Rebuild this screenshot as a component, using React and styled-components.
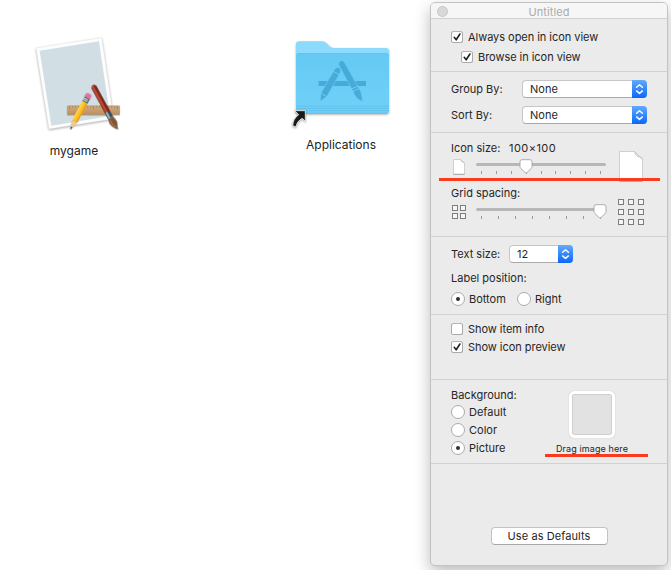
import React from "react";
import styled, { createGlobalStyle } from "styled-components";

const GlobalStyle = createGlobalStyle`
  * { box-sizing: border-box; }
  body {
    margin: 0;
    background: #fff;
    font-family: Inter, "Liberation Sans", sans-serif;
    color: #262626;
    overflow: hidden;
  }
`;

const Screen = styled.main`
  display: flex;
  width: 671px;
  height: 570px;
  overflow: hidden;
  background: #fff;
`;

const Desktop = styled.section`
  display: flex;
  align-items: flex-start;
  gap: 147px;
  width: 430px;
  padding: 25px 0 0 14px;
`;

const DesktopItem = styled.figure`
  display: flex;
  flex-direction: column;
  width: 120px;
  margin: ${(p) => p.$drop || 0}px 0 0;
  svg { display: block; }
`;

const ItemName = styled.figcaption`
  font-size: 12px;
  line-height: 22px;
  text-align: center;
  color: #222;
`;

const Panel = styled.aside`
  width: 238px;
  height: 564px;
  margin-top: 2px;
  background: #ebebeb;
  border: 1px solid #c3c3c3;
  border-radius: 5px;
  box-shadow: 0 6px 16px rgba(0, 0, 0, 0.27);
  font-size: 11px;
`;

const TitleBar = styled.header`
  display: grid;
  grid-template-columns: 11px 1fr 11px;
  align-items: center;
  height: 16px;
  padding: 0 6px;
  border-bottom: 1px solid #d0d0d0;
  border-radius: 4px 4px 0 0;
  background: #f6f6f6;
`;

const CloseDot = styled.span`
  width: 11px;
  height: 11px;
  border: 1px solid #c6c6c6;
  border-radius: 50%;
  background: #d9d9d9;
`;

const Title = styled.h1`
  margin: 0;
  padding-top: 2px;
  font-size: 11px;
  font-weight: 400;
  line-height: 15px;
  letter-spacing: 0.1px;
  text-align: center;
  color: #ababab;
`;

const Section = styled.section`
  position: relative;
  height: ${(p) => p.$height}px;
  padding: ${(p) => p.$top}px 20px 0;
  border-bottom: 1px solid #d1d1d1;
`;

const Row = styled.div`
  display: flex;
  align-items: center;
  height: ${(p) => p.$height || 18}px;
  padding-left: ${(p) => p.$indent || 0}px;
`;

const Label = styled.span`
  flex: none;
  width: ${(p) => (p.$width ? p.$width + "px" : "auto")};
  line-height: 14px;
  letter-spacing: ${(p) => p.$track || 0}px;
  white-space: nowrap;
`;

const Choice = styled.label`
  display: flex;
  align-items: center;
  gap: ${(p) => p.$gap || 5}px;
  width: ${(p) => (p.$width ? p.$width + "px" : "auto")};
`;

const Box = styled.span`
  display: flex;
  width: 12px;
  height: 12px;
  border: 1px solid #aaa;
  border-top-color: #b5b5b5;
  border-radius: 2.5px;
  background: #fff;
`;

const Dot = styled.span`
  display: grid;
  place-items: center;
  width: 14px;
  height: 14px;
  border: 1px solid #ababab;
  border-radius: 50%;
  background: #fff;
  &::after {
    content: "";
    width: 4px;
    height: 4px;
    border-radius: 50%;
    background: ${(p) => (p.$on ? "#303030" : "transparent")};
  }
`;

const Select = styled.div`
  display: flex;
  width: ${(p) => p.$width}px;
  height: 18px;
  border: 1px solid #c6c6c6;
  border-bottom-color: #a9a9a9;
  border-right: 0;
  border-radius: 4px;
  background: #fff;
`;

const SelectValue = styled.span`
  flex: 1;
  padding-left: 7px;
  line-height: 16px;
`;

const Stepper = styled.span`
  width: 15px;
  height: 18px;
  margin-top: -1px;
  border-radius: 0 4px 4px 0;
  background: linear-gradient(#62aafc, #0b67fa);
  svg { display: block; }
`;

const SliderRow = styled.div`
  display: grid;
  grid-template-columns: 25px 130px 1fr;
  height: ${(p) => p.$height}px;
`;

const Slider = styled.div`
  position: relative;
  padding-top: ${(p) => p.$top}px;
`;

const Track = styled.div`
  height: 3px;
  border-radius: 2px;
  background: #b7b7b7;
`;

const Ticks = styled.div`
  display: flex;
  justify-content: space-between;
  padding: 5px 5px 0;
  i { width: 1px; height: 3px; background: #999; }
`;

const Knob = styled.svg`
  position: absolute;
  left: ${(p) => p.$left}px;
  top: ${(p) => p.$top}px;
`;

const Glyph = styled.svg`
  display: block;
  margin: ${(p) => p.$margin};
`;

const RedLine = styled.span`
  position: absolute;
  left: ${(p) => p.$left}px;
  top: ${(p) => p.$top}px;
  width: ${(p) => p.$width}px;
  height: 3px;
  background: #fc3a20;
`;

const BackgroundGrid = styled.div`
  display: grid;
  grid-template-columns: 105px 72px;
`;

const WellColumn = styled.div`
  display: flex;
  flex-direction: column;
  align-items: center;
  padding-top: 4px;
`;

const ImageWell = styled.div`
  width: 46px;
  height: 47px;
  border: 3px solid #fff;
  border-radius: 5px;
  background: #e2e2e2;
  box-shadow: 0 0 1px #aaa, inset 0 0 0 1px #cfcfcf;
`;

const WellCaption = styled.span`
  margin-top: 5px;
  font-size: 9px;
  line-height: 12px;
  letter-spacing: 0.1px;
  white-space: nowrap;
`;

const Footer = styled.footer`
  display: flex;
  justify-content: center;
  padding-top: 63px;
`;

const Button = styled.button`
  width: 117px;
  height: 18px;
  padding: 0;
  border: 1px solid #c4c4c4;
  border-bottom-color: #a8a8a8;
  border-radius: 4px;
  background: #fff;
  color: #262626;
  font: 400 11px/15px Inter, sans-serif;
  letter-spacing: 0.08px;
`;

function Check({ on, children }) {
  return (
    <Choice>
      <Box>
        {on && (
          <svg width="10" height="10" viewBox="0 0 10 10">
            <path d="M2.2 5.3 L4.2 7.8 L7.9 2" fill="none" stroke="#222" strokeWidth="1.6" strokeLinecap="round" strokeLinejoin="round" />
          </svg>
        )}
      </Box>
      <Label $track={-0.04}>{children}</Label>
    </Choice>
  );
}

function Radio({ on, width, children }) {
  return (
    <Choice $gap={4} $width={width}>
      <Dot $on={on} />
      <Label>{children}</Label>
    </Choice>
  );
}

function Popup({ width, children }) {
  return (
    <Select $width={width}>
      <SelectValue>{children}</SelectValue>
      <Stepper>
        <svg width="15" height="18" viewBox="0 0 15 18">
          <path d="M4.6 7.2 L7.5 4.7 L10.4 7.2 M4.6 10.9 L7.5 13.4 L10.4 10.9" fill="none" stroke="#fff" strokeWidth="1.4" strokeLinecap="round" strokeLinejoin="round" />
        </svg>
      </Stepper>
    </Select>
  );
}

function Range({ top, ticks, knob }) {
  return (
    <Slider $top={top}>
      <Track />
      <Ticks>{Array.from({ length: ticks }, (_, i) => <i key={i} />)}</Ticks>
      <Knob $left={knob} $top={top - 4} width="14" height="16" viewBox="0 0 14 16">
        <path d="M3 .7 H11 Q13 .7 13 2.7 V7.6 Q13 8.7 12.2 9.5 L7.8 13.6 Q7 14.3 6.2 13.6 L1.8 9.5 Q1 8.7 1 7.6 V2.7 Q1 .7 3 .7Z" fill="#fff" stroke="#a5a5a5" strokeWidth=".9" />
      </Knob>
    </Slider>
  );
}

function PageGlyph({ width, height, fold, margin }) {
  const w = width - 1;
  const h = height - 1;
  return (
    <Glyph $margin={margin} width={width} height={height} viewBox={`0 0 ${width} ${height}`}>
      <path d={`M.5 .5 H${w + 0.5 - fold} L${w + 0.5} ${fold + 0.5} V${h + 0.2} H.5Z`} fill="#fff" stroke="#c6c6c6" strokeWidth=".8" />
      <path d={`M${w + 0.5 - fold} .5 Q${w + 1.5 - fold} ${fold * 0.6} ${w - fold * 0.5} ${fold * 0.7} Q${w} ${fold * 0.7} ${w + 0.5} ${fold + 0.5}Z`} fill="#f3f3f3" stroke="#bcbcbc" strokeWidth=".8" strokeLinejoin="round" />
      <path d={`M.5 ${h + 0.4} H${w + 0.5}`} stroke="#a9a9a9" strokeWidth="1" />
    </Glyph>
  );
}

function GridGlyph({ count, step, size, box, margin }) {
  const cells = Array.from({ length: count * count }, (_, i) => [i % count, Math.floor(i / count)]);
  return (
    <Glyph $margin={margin} width={size} height={size} viewBox={`0 0 ${size} ${size}`}>
      {cells.map(([x, y]) => (
        <rect key={`${x}-${y}`} x={x * step + 0.5} y={y * step + 0.5} width={box} height={box} fill="#f5f5f5" stroke="#7d7d7d" />
      ))}
    </Glyph>
  );
}

function GameIcon() {
  return (
    <svg width="120" height="115" viewBox="-18 0 360 345">
      <defs>
        <filter id="paperShadow" x="-10%" y="-10%" width="120%" height="125%" colorInterpolationFilters="sRGB">
          <feDropShadow dx="0" dy="3" stdDeviation="3.5" floodOpacity=".32" />
        </filter>
        <filter id="toolShadow" x="-30%" y="-10%" width="160%" height="120%" colorInterpolationFilters="sRGB">
          <feDropShadow dx="0" dy="2" stdDeviation="2" floodOpacity=".25" />
        </filter>
        <linearGradient id="ruler" x1="0" y1="0" x2="0" y2="1">
          <stop offset="0" stopColor="#d0ab7f" />
          <stop offset="1" stopColor="#b98f63" />
        </linearGradient>
        <linearGradient id="pencil" x1="0" y1="0" x2="1" y2="0">
          <stop offset="0" stopColor="#ffd64a" />
          <stop offset=".55" stopColor="#fdbf25" />
          <stop offset="1" stopColor="#e19a14" />
        </linearGradient>
        <linearGradient id="handle" x1="0" y1="0" x2="1" y2="0">
          <stop offset="0" stopColor="#74190f" />
          <stop offset=".35" stopColor="#cc5a45" />
          <stop offset=".6" stopColor="#9c2a1b" />
          <stop offset="1" stopColor="#5a120b" />
        </linearGradient>
      </defs>
      <path d="M48 69 L245 38 L281 281 L87 312Z" fill="#fdfdfd" stroke="#e2e2e2" strokeWidth="1" filter="url(#paperShadow)" />
      <path d="M59 77 L237 49 L270 273 L94 302Z" fill="#d1dfe4" />
      <rect x="142" y="242" width="157" height="27" rx="2" fill="url(#ruler)" stroke="#b08a60" filter="url(#toolShadow)" />
      <path d="M149 243v9M158 243v5M167 243v5M176 243v5M185 243v9M194 243v5M203 243v5M212 243v5M221 243v9M230 243v5M239 243v5M248 243v5M257 243v9M266 243v5M275 243v5M284 243v5M292 243v9" stroke="#8a6843" strokeWidth="1.6" />
      <g transform="translate(151 314) rotate(28)" filter="url(#toolShadow)">
        <path d="M0 0 L-9 -27 L9 -27Z" fill="#ecc99d" />
        <path d="M0 0 L-3 -9 L3 -9Z" fill="#444" />
        <path d="M-9 -26 V-94 H9 V-26 L4.5 -30 L0 -26 L-4.5 -30Z" fill="url(#pencil)" />
        <rect x="-9" y="-108" width="18" height="15" fill="#5d686f" />
        <path d="M-9 -103H5M-9 -98H5" stroke="#d5e2e8" strokeWidth="3" />
        <path d="M-9.5 -108 V-116 Q-9 -122 0 -122 Q9 -122 9.5 -116 V-108Z" fill="#e0739f" />
      </g>
      <g transform="translate(291 314) rotate(-28.5)" filter="url(#toolShadow)">
        <path d="M-8 -145 Q-7 -152 0 -152 Q7 -152 8 -145 L8 -60 H-8Z" fill="url(#handle)" />
        <rect x="-8.5" y="-61" width="17" height="21" fill="#3f4f59" />
        <path d="M-3 -61 V-40" stroke="#a9c9da" strokeWidth="5" />
        <path d="M-8.5 -40 H8.5 Q14 -24 9 -14 Q5 -8 4 1 Q-5 -6 -9 -17 Q-13 -28 -8.5 -40Z" fill="#805736" />
        <path d="M-4 -34 Q-7 -19 0 -8" fill="none" stroke="#a87c50" strokeWidth="3" />
      </g>
    </svg>
  );
}

function FolderIcon() {
  return (
    <svg width="120" height="104" viewBox="3 0 360 312">
      <defs>
        <linearGradient id="folder" x1="0" y1="0" x2="0" y2="1">
          <stop offset="0" stopColor="#64caf4" />
          <stop offset="1" stopColor="#71d0f7" />
        </linearGradient>
        <filter id="folderShadow" x="-10%" y="-10%" width="120%" height="125%" colorInterpolationFilters="sRGB">
          <feDropShadow dx="0" dy="3" stdDeviation="2.5" floodOpacity=".32" />
        </filter>
      </defs>
      <path d="M48 242 V43 Q48 34 58 34 H127 Q134 34 139 39 L149 49 Q154 54 162 54 H317 Q327 54 327 64 V242 Q327 251 318 251 H57 Q48 251 48 242Z" fill="#8cdafc" filter="url(#folderShadow)" />
      <path d="M48 242 V77 Q48 70 57 70 H318 Q327 70 327 77 V242 Q327 251 318 251 H57 Q48 251 48 242Z" fill="url(#folder)" />
      <path d="M51 70.5 H324" stroke="#5abfea" strokeWidth="2" />
      <path d="M48 228H327M48 235H327M48 242H327" stroke="#56bbe6" strokeWidth="2" />
      <path d="M54 250H321" stroke="#55b3dc" strokeWidth="2" />
      <g fill="#46abd8">
        <path d="M116 153 H258 V168 H116Z" />
        <g stroke="#66caf3" strokeWidth="2">
          <path d="M121 214 L123 189 L164 118 Q168 110 176 113 Q185 117 181 127 L141 199Z" />
          <path d="M176 104 Q175 94 184 92 Q190 91 194 98 L236 174 Q246 185 247 214 Q227 207 219 184Z" />
        </g>
        <path d="M160 124 L177 134 M123 190 L140 200 M216 176 L234 168 M219 184 L237 176" fill="none" stroke="#72d1f8" strokeWidth="2.5" />
      </g>
      <path d="M44 242 H76 V274 L67 265 Q51 273 48 291 L38 287 Q39 266 56 254Z" fill="#191919" stroke="#dedede" strokeWidth="3" strokeLinejoin="round" filter="url(#folderShadow)" />
    </svg>
  );
}

export default function App() {
  return (
    <>
      <GlobalStyle />
      <Screen>
        <Desktop>
          <DesktopItem>
            <GameIcon />
            <ItemName>mygame</ItemName>
          </DesktopItem>
          <DesktopItem $drop={5}>
            <FolderIcon />
            <ItemName>Applications</ItemName>
          </DesktopItem>
        </Desktop>
        <Panel>
          <TitleBar>
            <CloseDot />
            <Title>Untitled</Title>
          </TitleBar>
          <Section $height={53} $top={8}>
            <Row $height={20}><Check on>Always open in icon view</Check></Row>
            <Row $height={20} $indent={10}><Check on>Browse in icon view</Check></Row>
          </Section>
          <Section $height={61} $top={4}>
            <Row $height={26}>
              <Label $width={71}>Group By:</Label>
              <Popup width={125}>None</Popup>
            </Row>
            <Row $height={26}>
              <Label $width={71}>Sort By:</Label>
              <Popup width={125}>None</Popup>
            </Row>
          </Section>
          <Section $height={104} $top={5}>
            <Row $height={20}>
              <Label $width={58}>Icon size:</Label>
              <Label $track={0.45}>100×100</Label>
            </Row>
            <SliderRow $height={25}>
              <PageGlyph width={12} height={16} fold={4} margin="1px 0 0 2px" />
              <Range top={5} ticks={9} knob={43} />
              <PageGlyph width={24} height={31} fold={8} margin="-7px 0 0 13px" />
            </SliderRow>
            <Row $height={20}><Label>Grid spacing:</Label></Row>
            <SliderRow $height={30}>
              <GridGlyph count={2} step={8} size={14} box={5} margin="2px 0 0 1px" />
              <Range top={5} ticks={8} knob={117} />
              <GridGlyph count={3} step={10} size={26} box={5} margin="-4px 0 0 12px" />
            </SliderRow>
            <RedLine $left={8} $top={45} $width={221} />
          </Section>
          <Section $height={78} $top={4}>
            <Row $height={26}>
              <Label $width={58}>Text size:</Label>
              <Popup width={64}>12</Popup>
            </Row>
            <Row $height={22}><Label>Label position:</Label></Row>
            <Row $height={20}>
              <Radio on width={66}>Bottom</Radio>
              <Radio>Right</Radio>
            </Row>
          </Section>
          <Section $height={65} $top={5}>
            <Row><Check>Show item info</Check></Row>
            <Row><Check on>Show icon preview</Check></Row>
          </Section>
          <Section $height={84} $top={7}>
            <BackgroundGrid>
              <div>
                <Row $height={16}><Label>Background:</Label></Row>
                <Row><Radio>Default</Radio></Row>
                <Row><Radio>Color</Radio></Row>
                <Row><Radio on>Picture</Radio></Row>
              </div>
              <WellColumn>
                <ImageWell />
                <WellCaption>Drag image here</WellCaption>
              </WellColumn>
            </BackgroundGrid>
            <RedLine $left={114} $top={74} $width={103} />
          </Section>
          <Footer><Button>Use as Defaults</Button></Footer>
        </Panel>
      </Screen>
    </>
  );
}
